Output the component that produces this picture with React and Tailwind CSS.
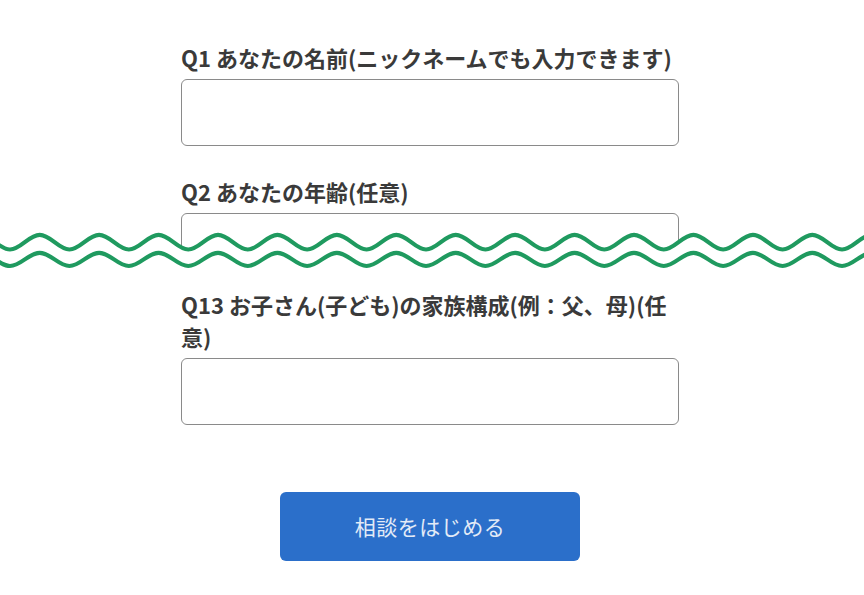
import React from "react";

const P = 59.43;
const X0 = 10;

function wavePath(cy, a, close) {
  const half = P / 2;
  const h = 0.3634 * half;
  let x = X0 - 2 * P;
  let up = false;
  let y = cy + a;
  let d = `M ${x.toFixed(2)} ${y.toFixed(2)}`;
  while (x < 864 + P) {
    const nx = x + half;
    up = !up;
    const ny = up ? cy - a : cy + a;
    d += ` C ${(x + h).toFixed(2)} ${y.toFixed(2)} ${(nx - h).toFixed(2)} ${ny.toFixed(2)} ${nx.toFixed(2)} ${ny.toFixed(2)}`;
    x = nx;
    y = ny;
  }
  if (close) {
    d += ` L ${x.toFixed(2)} ${close} L ${(X0 - 2 * P).toFixed(2)} ${close} Z`;
  }
  return d;
}

function WaveCut() {
  return (
    <svg
      className="absolute left-0 top-[220px] overflow-visible"
      width="864"
      height="70"
      viewBox="0 0 864 70"
      aria-hidden="true"
    >
      <path d={wavePath(22.2, 7.3, 66)} fill="#ffffff" stroke="none" />
      <path d={wavePath(22.2, 7.3)} fill="none" stroke="#1f9a5f" strokeWidth="4.2" strokeLinecap="round" />
      <path d={wavePath(39.4, 6.6)} fill="none" stroke="#1f9a5f" strokeWidth="4.2" strokeLinecap="round" />
    </svg>
  );
}

function Field({ label, className = "" }) {
  return (
    <div className={className}>
      <label className="block text-[22px] leading-[32px] font-bold text-[#3a3a3a] mb-[6px]">
        {label}
      </label>
      <div className="h-[67px] w-full rounded-[6px] border-[1.5px] border-[#8a8a8a] bg-white" />
    </div>
  );
}

export default function App() {
  return (
    <div
      className="relative min-h-screen bg-white overflow-hidden"
      style={{ fontFamily: '"Noto Sans CJK JP", "Noto Sans", sans-serif' }}
    >
      <div className="ml-[181px] w-[498px] pt-[41px]">
        <Field label="Q1 あなたの名前(ニックネームでも入力できます)" />
        <Field label="Q2 あなたの年齢(任意)" className="mt-[29px]" />
        <Field label="Q13 お子さん(子ども)の家族構成(例：父、母)(任意)" className="mt-[8px]" />
        <div className="flex justify-center mt-[67px]">
          <button className="h-[69px] w-[300px] rounded-[6px] bg-[#2b6fca] text-[21px] text-[#e3ebf7] tracking-[0.5px]">
            相談をはじめる
          </button>
        </div>
      </div>
      <WaveCut />
    </div>
  );
}
